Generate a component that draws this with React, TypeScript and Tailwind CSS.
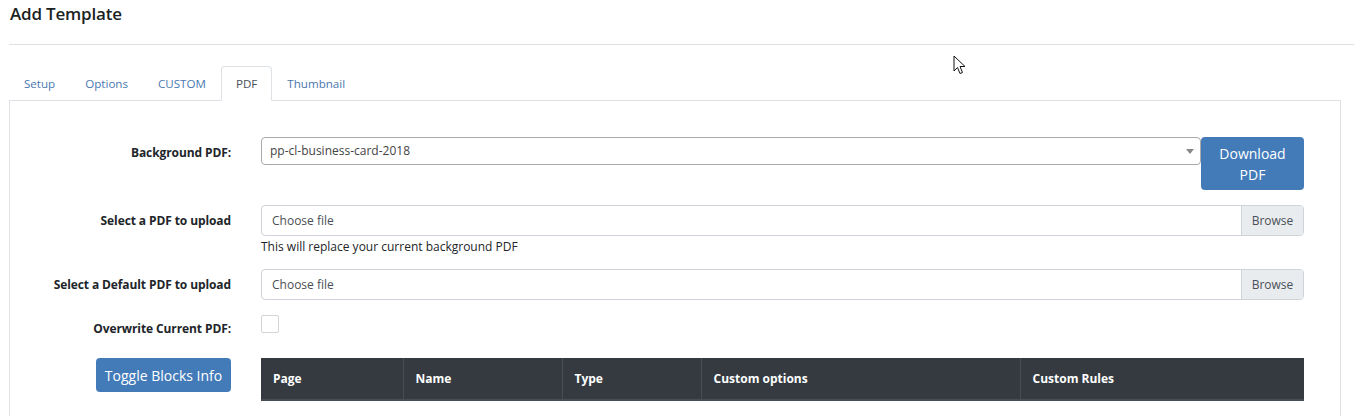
import React from "react";

const tabs = ["Setup", "Options", "CUSTOM", "PDF", "Thumbnail"];
const columns = [
  { label: "Page", width: "w-[142px]" },
  { label: "Name", width: "w-[159px]" },
  { label: "Type", width: "w-[139px]" },
  { label: "Custom options", width: "w-[319px]" },
  { label: "Custom Rules", width: "w-[284px]" },
];

function FileInput() {
  return (
    <div className="flex h-[31px] border border-[#ced4da] rounded-[4px] overflow-hidden">
      <div className="flex-1 flex items-center pl-[10px] text-[12px] text-[#495057]">
        Choose file
      </div>
      <div className="w-[62px] flex items-center justify-center bg-[#e9ecef] border-l border-[#ced4da] text-[12px] text-[#495057]">
        Browse
      </div>
    </div>
  );
}

function Cursor() {
  return (
    <svg
      className="absolute left-[953px] top-[55px]"
      width="14"
      height="21"
      viewBox="0 0 14 21"
    >
      <path
        d="M1 1 L1 16 L4.5 12.5 L7 18.5 L9.5 17.5 L7 11.5 L12 11.5 Z"
        fill="white"
        stroke="#111"
        strokeWidth="1"
        strokeLinejoin="round"
      />
    </svg>
  );
}

export default function App(): React.ReactElement {
  return (
    <div className="relative w-[1354px] h-[416px] overflow-hidden bg-white text-[#212529] font-['Open_Sans',sans-serif]">
      <h1 className="pl-[10px] pt-[3px] text-[17px] leading-[22px] font-semibold tracking-[-0.2px] text-[#1c1f23]">
        Add Template
      </h1>
      <div className="ml-[9px] mt-[19px] border-t border-[#dee2e6]" />

      <div className="ml-[9px] mr-[13px] mt-[21px]">
        <ul className="flex border-b border-[#dee2e6] text-[11.6px]">
          {tabs.map((t) => (
            <li
              key={t}
              className={
                t === "PDF"
                  ? "h-[35px] -mb-px px-[14px] pt-[1px] flex items-center border border-[#dee2e6] border-b-white rounded-t-[4px] bg-white text-[#495057]"
                  : "h-[34px] px-[15px] pt-[1px] flex items-center text-[#4a78b0]"
              }
            >
              {t}
            </li>
          ))}
        </ul>

        <div className="border-x border-[#dee2e6] pt-[36px] pr-[36px] h-[320px]">
          <div className="grid grid-cols-[221px_1fr] gap-x-[30px] text-[12px]">
            {/* Background PDF */}
            <div className="text-right font-bold pt-[7px] leading-[18px] tracking-[-0.1px]">
              Background PDF:
            </div>
            <div className="flex items-start">
              <div className="relative flex-1 h-[28px] border border-[#aaa] rounded-[4px] flex items-center pl-[8px] text-[#444]">
                pp-cl-business-card-2018
                <span className="absolute right-[6px] top-[11px] w-0 h-0 border-x-[4px] border-x-transparent border-t-[5px] border-t-[#888]" />
              </div>
              <button className="w-[103px] h-[53px] bg-[#437bb9] text-white text-[14px] leading-[21px] rounded-[4px]">
                Download
                <br />
                PDF
              </button>
            </div>

            {/* Select a PDF */}
            <div className="mt-[15px] text-right font-bold pt-[7px] leading-[18px] tracking-[-0.1px]">
              Select a PDF to upload
            </div>
            <div className="mt-[15px]">
              <FileInput />
              <div className="mt-[2px] leading-[18px] text-[12px]">
                This will replace your current background PDF
              </div>
            </div>

            {/* Default PDF */}
            <div className="mt-[13px] text-right font-bold pt-[7px] leading-[18px] tracking-[-0.1px]">
              Select a Default PDF to upload
            </div>
            <div className="mt-[13px]">
              <FileInput />
            </div>

            {/* Overwrite */}
            <div className="mt-[15px] text-right font-bold pt-[5px] leading-[18px] tracking-[-0.1px]">
              Overwrite Current PDF:
            </div>
            <div className="mt-[15px]">
              <div className="w-[18px] h-[18px] border border-[#d4d4d4] rounded-[2px] bg-white" />
            </div>

            {/* Toggle + table */}
            <div className="mt-[20px] flex justify-end">
              <button className="w-[135px] h-[34px] bg-[#437bb9] text-white text-[14px] rounded-[4px]">
                Toggle Blocks Info
              </button>
            </div>
            <div className="mt-[20px]">
              <table className="w-full border-collapse bg-[#343a40] text-white text-[12px]">
                <thead>
                  <tr className="h-[42px] border-b-2 border-[#454d55]">
                    {columns.map((c, i) => (
                      <th
                        key={c.label}
                        className={
                          "text-left font-bold pl-[12px] " +
                          c.width +
                          (i > 0 ? " border-l border-[#454d55]" : "")
                        }
                      >
                        {c.label}
                      </th>
                    ))}
                  </tr>
                </thead>
              </table>
            </div>
          </div>
        </div>
      </div>

      <Cursor />
    </div>
  );
}
